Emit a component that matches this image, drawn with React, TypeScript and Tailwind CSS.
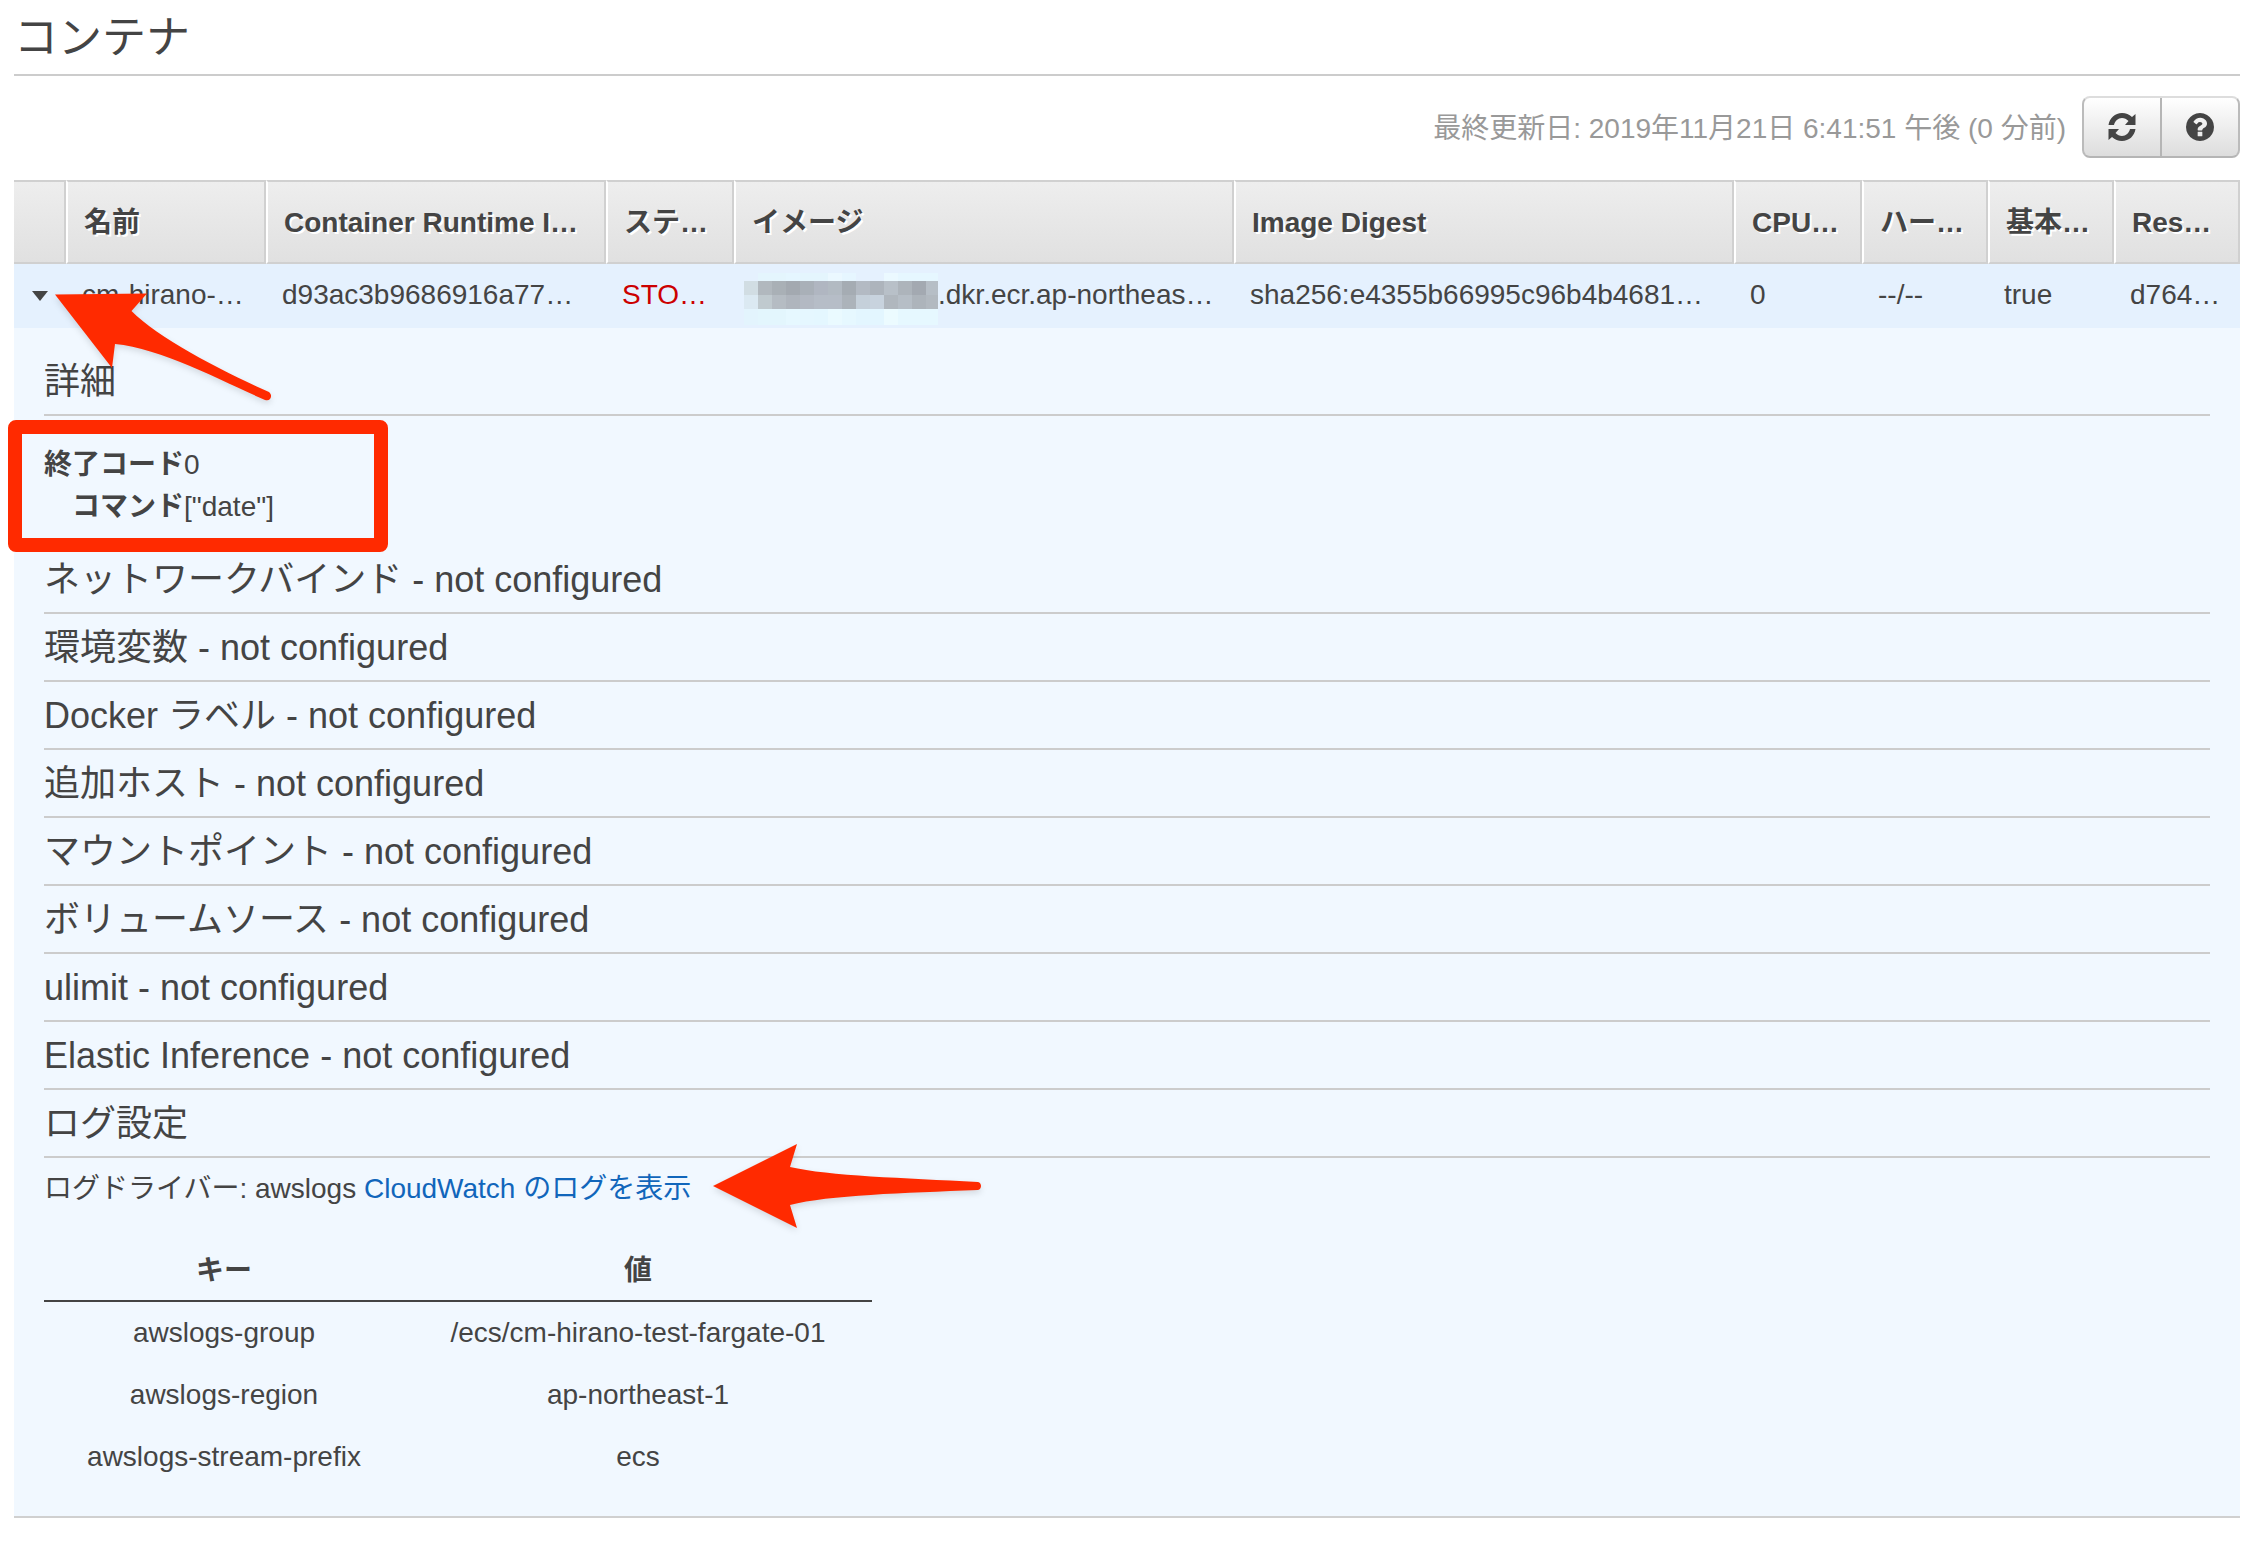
import React from "react";

interface Column {
  label: string;
  value: React.ReactNode;
  width: string;
}

// shades of the masked registry id, one array per row of blocks
const mask = [
  ["#e5f1fe", "#e4f5fd", "#e4f5fd", "#e5f6ff", "#e4f5fd", "#e4f5fd", "#ebf8ff", "#e6f6ff", "#e5f1fe", "#e5f1fe", "#ebf9ff", "#e6f7ff", "#e6f7ff", "#e6f7ff"],
  ["#d1dde3", "#b1b8be", "#a9b0b6", "#a3a9b0", "#a9b0b8", "#b0b6c1", "#b2bac2", "#a5acb3", "#b3bac3", "#adb4bc", "#b8c0c8", "#adb4bb", "#a3a9b1", "#b6bec6"],
  ["#dbe9f2", "#c0cacf", "#b5bcc3", "#afb5bd", "#b3b9c3", "#b6bdc7", "#b6bdc7", "#acb3ba", "#c5d0da", "#c8d3de", "#b0b7be", "#b6bec6", "#adb4bb", "#b2b9c0"],
  ["#e3f4fd", "#e3f6fd", "#e3f6fd", "#e6f8ff", "#e5f7ff", "#e4f7ff", "#eafaff", "#e6f8ff", "#e3f6ff", "#e3f6ff", "#ecfbff", "#e6f8ff", "#e6f8ff", "#e6f8ff"],
];

const Mask = () => (
  <svg className="mt-2 -ml-1.5 shrink-0" width="194" height="52" viewBox="0 0 194 52" aria-hidden="true">
    {mask.map((row, r) =>
      row.map((fill, c) => (
        <rect key={`${r}-${c}`} x={c * 14} y={[0, 8, 22, 36][r]} width="14" height={[8, 14, 14, 16][r]} fill={fill} />
      ))
    )}
  </svg>
);

const columns: Column[] = [
  { label: "名前", value: "cm-hirano-…", width: "w-[200px]" },
  { label: "Container Runtime I…", value: "d93ac3b9686916a77…", width: "w-[340px]" },
  { label: "ステ…", value: <span className="text-[#cc0000]">STO…</span>, width: "w-[128px]" },
  {
    label: "イメージ",
    value: (
      <div className="-my-2 flex items-center">
        <Mask />
        .dkr.ecr.ap-northeas…
      </div>
    ),
    width: "w-[500px]",
  },
  { label: "Image Digest", value: "sha256:e4355b66995c96b4b4681…", width: "w-[500px]" },
  { label: "CPU…", value: "0", width: "w-[128px]" },
  { label: "ハー…", value: "--/--", width: "w-[126px]" },
  { label: "基本…", value: "true", width: "w-[126px]" },
  { label: "Res…", value: "d764…", width: "w-[126px]" },
];

const emptySections = [
  "ネットワークバインド",
  "環境変数",
  "Docker ラベル",
  "追加ホスト",
  "マウントポイント",
  "ボリュームソース",
  "ulimit",
  "Elastic Inference",
];

const logOptions = [
  { key: "awslogs-group", value: "/ecs/cm-hirano-test-fargate-01" },
  { key: "awslogs-region", value: "ap-northeast-1" },
  { key: "awslogs-stream-prefix", value: "ecs" },
];

const SectionTitle = ({ children }: { children: React.ReactNode }) => (
  <h3 className="h-[68px] border-b-2 border-[#cccccc] text-[36px] leading-[68px]">{children}</h3>
);

const RefreshIcon = () => (
  <svg width="28" height="28" viewBox="0 0 28 28" fill="currentColor" aria-hidden="true">
    <path d="M.5 12C1.500 5 7 0 14 0c4 0 7 1.500 10 4l3.500-3v11H17l3.500-4c-2-2-4-3-6.500-3-4 0-7 3-8 7zM27.500 16c-1 7-6.500 12-13.500 12-4 0-7-1.500-10-4l-3.500 3V16H11l-3.500 4c2 2 4 3 6.500 3 4 0 7-3 8-7z" />
  </svg>
);

const HelpIcon = () => (
  <svg width="28" height="28" viewBox="0 0 1536 1536" fill="currentColor" aria-hidden="true">
    <path d="M896 1248v-192q0-14-9-23t-23-9h-192q-14 0-23 9t-9 23v192q0 14 9 23t23 9h192q14 0 23-9t9-23zm256-672q0-88-55.500-163t-138.500-116-170-41q-243 0-371 213-15 24 8 42l132 100q7 6 19 6 16 0 25-12 53-68 86-92 34-24 86-24 48 0 85.500 26t37.500 59q0 38-20 61t-68 45q-63 28-115.500 86.500t-52.500 125.500v36q0 14 9 23t23 9h192q14 0 23-9t9-23q0-19 21.500-49.500t54.500-49.500q32-18 49-28.500t46-35 44.500-48 28-60.500 12.500-81zm384 192q0 209-103 385.500t-279.500 279.500-385.500 103-385.500-103-279.500-279.500-103-385.500 103-385.500 279.500-279.500 385.500-103 385.500 103 279.500 279.500 103 385.500z" />
  </svg>
);

const App: React.FC = () => {
  return (
    <main className="bg-white px-3.5 pr-5 pb-7 font-['Liberation_Sans','Noto_Sans_CJK_JP',sans-serif] text-[28px] leading-[42px] text-[#444444]">
      <h2 className="h-19 border-b-2 border-[#cccccc] text-[44px] leading-[76px]">コンテナ</h2>

      <div className="flex h-26 items-start justify-end gap-4 pt-5">
        <span className="leading-[66px] text-[#999999]">最終更新日: 2019年11月21日 6:41:51 午後 (0 分前)</span>
        <div className="flex h-[62px] overflow-hidden rounded-lg border-2 border-t-[#dddddd] border-r-[#bbbbbb] border-b-[#b5b5b5] border-l-[#bbbbbb] bg-linear-to-b from-white to-[#dddddd]">
          <button type="button" aria-label="更新" className="flex w-[78px] items-center justify-center border-r-2 border-[#b5b5b5]">
            <RefreshIcon />
          </button>
          <button type="button" aria-label="ヘルプ" className="flex w-[76px] items-center justify-center">
            <HelpIcon />
          </button>
        </div>
      </div>

      <table className="w-full table-fixed border-separate border-spacing-0 text-left whitespace-nowrap">
        <thead>
          <tr className="h-21 bg-linear-to-b from-[#eeeeee] to-[#e0e0e0] [text-shadow:2px_2px_0_#ffffff]">
            <th className="w-[52px] border-y-2 border-r-2 border-[#d0d0d0]" />
            {columns.map((c) => (
              <th
                key={c.label}
                className={`${c.width} overflow-hidden border-y-2 border-r-2 border-l-2 border-[#d0d0d0] border-l-white pt-0.5 pl-4`}
              >
                {c.label}
              </th>
            ))}
          </tr>
        </thead>
        <tbody>
          <tr className="h-16 bg-[#e5f1fe]">
            <td className="pl-4.5">
              <button type="button" aria-label="詳細を閉じる" className="block">
                <svg width="16" height="10" viewBox="0 0 16 10" fill="currentColor" aria-hidden="true">
                  <path d="M0 0h16L8 10z" />
                </svg>
              </button>
            </td>
            {columns.map((c) => (
              <td key={c.label} className="overflow-hidden pb-0.5 pl-4">
                {c.value}
              </td>
            ))}
          </tr>
        </tbody>
      </table>

      <section className="relative border-b-2 border-[#d0d0d0] bg-[#f1f8ff] px-[30px] pt-5 pb-7">
        <SectionTitle>詳細</SectionTitle>

        <dl className="grid h-[130px] grid-cols-[140px_1fr] content-start pt-7">
          <dt className="text-right font-bold">終了コード</dt>
          <dd>0</dd>
          <dt className="text-right font-bold">コマンド</dt>
          <dd>["date"]</dd>
        </dl>

        {emptySections.map((name) => (
          <SectionTitle key={name}>{name} - not configured</SectionTitle>
        ))}

        <SectionTitle>ログ設定</SectionTitle>
        <p className="pt-2.5">
          ログドライバー: awslogs{" "}
          <a href="#logs" className="text-[#1166bb]">
            CloudWatch のログを表示
          </a>
        </p>

        <table className="mt-7.5 w-[828px] table-fixed border-separate border-spacing-0 text-center">
          <thead>
            <tr className="h-[62px]">
              <th className="w-[360px] border-b-2 border-[#444444] pt-0.5">キー</th>
              <th className="border-b-2 border-[#444444] pt-0.5">値</th>
            </tr>
          </thead>
          <tbody>
            {logOptions.map((o) => (
              <tr key={o.key} className="h-[62px]">
                <td>{o.key}</td>
                <td>{o.value}</td>
              </tr>
            ))}
          </tbody>
        </table>

        {/* callouts drawn over the panel */}
        <div className="absolute top-[92px] -left-1.5 h-[132px] w-[380px] rounded-lg border-14 border-[#ff2a00]" />
        <svg className="absolute -top-[40px] left-[36px] drop-shadow-md" width="230" height="120" viewBox="0 0 230 120" fill="#ff2a00" aria-hidden="true">
          <path d="M5 6.500L97 5.500L81.500 23C108 50 170 82 219 104C223 107 221 114 215 112C170 92 110 60 65 56L62 80Z" />
        </svg>
        <svg className="absolute top-[810px] left-[690px] drop-shadow-md" width="290" height="100" viewBox="0 0 290 100" fill="#ff2a00" aria-hidden="true">
          <path d="M9 48L93 6L86 29C125 38 200 40 274 44C278 45 278 51 274 52C200 55 125 57 86 67L93 90Z" />
        </svg>
      </section>
    </main>
  );
};

export default App;
